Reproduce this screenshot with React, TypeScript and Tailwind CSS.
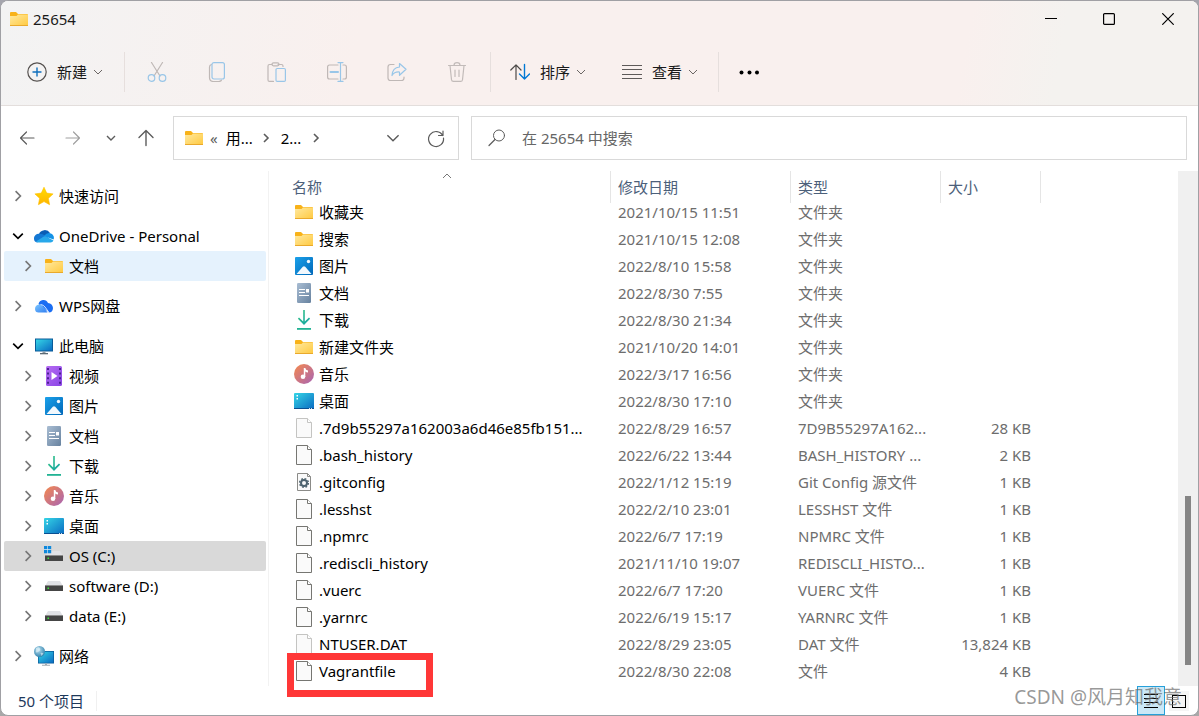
import type { ReactNode } from 'react';

type IconName =
  | 'folder'
  | 'star'
  | 'onedrive'
  | 'wps'
  | 'pc'
  | 'video'
  | 'picture'
  | 'document'
  | 'download'
  | 'music'
  | 'desktop'
  | 'drive'
  | 'system'
  | 'network'
  | 'file'
  | 'hidden'
  | 'config';

interface TreeItem {
  label: string;
  icon: IconName;
  open?: boolean;
  state?: 'hover' | 'selected';
  children?: TreeItem[];
}

interface FileItem {
  name: string;
  icon: IconName;
  date: string;
  type: string;
  size?: string;
  marked?: boolean;
}

const TREE: TreeItem[] = [
  { label: '快速访问', icon: 'star' },
  {
    label: 'OneDrive - Personal',
    icon: 'onedrive',
    open: true,
    children: [{ label: '文档', icon: 'folder', state: 'hover' }],
  },
  { label: 'WPS网盘', icon: 'wps' },
  {
    label: '此电脑',
    icon: 'pc',
    open: true,
    children: [
      { label: '视频', icon: 'video' },
      { label: '图片', icon: 'picture' },
      { label: '文档', icon: 'document' },
      { label: '下载', icon: 'download' },
      { label: '音乐', icon: 'music' },
      { label: '桌面', icon: 'desktop' },
      { label: 'OS (C:)', icon: 'system', state: 'selected' },
      { label: 'software (D:)', icon: 'drive' },
      { label: 'data (E:)', icon: 'drive' },
    ],
  },
  { label: '网络', icon: 'network' },
];

const FILES: FileItem[] = [
  { name: '收藏夹', icon: 'folder', date: '2021/10/15 11:51', type: '文件夹' },
  { name: '搜索', icon: 'folder', date: '2021/10/15 12:08', type: '文件夹' },
  { name: '图片', icon: 'picture', date: '2022/8/10 15:58', type: '文件夹' },
  { name: '文档', icon: 'document', date: '2022/8/30 7:55', type: '文件夹' },
  { name: '下载', icon: 'download', date: '2022/8/30 21:34', type: '文件夹' },
  { name: '新建文件夹', icon: 'folder', date: '2021/10/20 14:01', type: '文件夹' },
  { name: '音乐', icon: 'music', date: '2022/3/17 16:56', type: '文件夹' },
  { name: '桌面', icon: 'desktop', date: '2022/8/30 17:10', type: '文件夹' },
  { name: '.7d9b55297a162003a6d46e85fb151...', icon: 'hidden', date: '2022/8/29 16:57', type: '7D9B55297A162...', size: '28 KB' },
  { name: '.bash_history', icon: 'file', date: '2022/6/22 13:44', type: 'BASH_HISTORY ...', size: '2 KB' },
  { name: '.gitconfig', icon: 'config', date: '2022/1/12 15:19', type: 'Git Config 源文件', size: '1 KB' },
  { name: '.lesshst', icon: 'file', date: '2022/2/10 23:01', type: 'LESSHST 文件', size: '1 KB' },
  { name: '.npmrc', icon: 'file', date: '2022/6/7 17:19', type: 'NPMRC 文件', size: '1 KB' },
  { name: '.rediscli_history', icon: 'file', date: '2021/11/10 19:07', type: 'REDISCLI_HISTO...', size: '1 KB' },
  { name: '.vuerc', icon: 'file', date: '2022/6/7 17:20', type: 'VUERC 文件', size: '1 KB' },
  { name: '.yarnrc', icon: 'file', date: '2022/6/19 15:17', type: 'YARNRC 文件', size: '1 KB' },
  { name: 'NTUSER.DAT', icon: 'hidden', date: '2022/8/29 23:05', type: 'DAT 文件', size: '13,824 KB' },
  { name: 'Vagrantfile', icon: 'file', date: '2022/8/30 22:08', type: '文件', size: '4 KB', marked: true },
];

// Shared gradients, referenced by id from the item icons
function Gradients() {
  return (
    <svg className="absolute size-0" aria-hidden="true">
      <defs>
        <linearGradient id="g-folder" x1="0" y1="0" x2="1" y2="1">
          <stop offset="0" stopColor="#ffe9a0" />
          <stop offset="1" stopColor="#ffc93f" />
        </linearGradient>
        <linearGradient id="g-star" x1="0" y1="0" x2="0" y2="1">
          <stop offset="0" stopColor="#ffdd00" />
          <stop offset="1" stopColor="#ffb400" />
        </linearGradient>
        <linearGradient id="g-blue" x1="0" y1="0" x2="1" y2="1">
          <stop offset="0" stopColor="#1ba1ea" />
          <stop offset="1" stopColor="#0067b8" />
        </linearGradient>
        <linearGradient id="g-screen" x1="0" y1="0" x2="1" y2="1">
          <stop offset="0" stopColor="#35d5e6" />
          <stop offset="1" stopColor="#0a6bc2" />
        </linearGradient>
        <linearGradient id="g-video" x1="0" y1="0" x2="1" y2="1">
          <stop offset="0" stopColor="#b66bf2" />
          <stop offset="1" stopColor="#8a45e6" />
        </linearGradient>
        <linearGradient id="g-doc" x1="0" y1="0" x2="1" y2="1">
          <stop offset="0" stopColor="#a9bdd3" />
          <stop offset="1" stopColor="#67829f" />
        </linearGradient>
        <linearGradient id="g-down" x1="0" y1="0" x2="1" y2="1">
          <stop offset="0" stopColor="#33c481" />
          <stop offset="1" stopColor="#14a3a8" />
        </linearGradient>
        <linearGradient id="g-music" x1="0" y1="0" x2="1" y2="1">
          <stop offset="0" stopColor="#f6894c" />
          <stop offset="1" stopColor="#a764b5" />
        </linearGradient>
        <linearGradient id="g-wps" x1="0" y1="0" x2="1" y2="1">
          <stop offset="0" stopColor="#7cc6ff" />
          <stop offset="1" stopColor="#2f7df0" />
        </linearGradient>
        <radialGradient id="g-globe" cx="0.4" cy="0.35" r="0.7">
          <stop offset="0" stopColor="#b9e0f0" />
          <stop offset="1" stopColor="#2c7fab" />
        </radialGradient>
      </defs>
    </svg>
  );
}

const drive = (
  <>
    <path d="M4 5h12l3 5H1z" fill="#e1e2e6" />
    <path d="M1 9h18v6H1z" fill="#454545" />
    <path d="M1 9h18v1H1z" fill="#8d8d8d" />
    <path d="M3.5 11.5h1.5v1.5H3.5z" fill="#39e639" />
  </>
);

const sheet = (stroke: string) => (
  <g stroke={stroke} fill="#fafafa">
    <path d="M2.5 .5h11l4 4v15h-15z" />
    <path d="M13.5 .5v4h4" fill="#fff" />
  </g>
);

const ICONS: Record<IconName, ReactNode> = {
  folder: (
    <>
      <path d="M1 4a1 1 0 0 1 1-1h5l2 2h9a1 1 0 0 1 1 1v3H1z" fill="#f8b219" />
      <path d="M1 7h6.500l1.500-1.500h10V17H1z" fill="url(#g-folder)" />
      <path d="M1 16h18v1H1z" fill="#e9a92c" />
    </>
  ),
  star: <path d="m10 1.200 2.700 5.900 6.400.8-4.700 4.400 1.200 6.400L10 15.600l-5.600 3.100 1.200-6.400L.9 7.900l6.400-.8z" fill="url(#g-star)" stroke="#ffbf00" strokeWidth=".6" strokeLinejoin="round" />,
  onedrive: (
    <>
      <path d="M5 8a6 5.500 0 0 1 11-1l-5 6z" fill="#0a5db5" />
      <path d="M0 12.500A4.500 4.500 0 0 1 6 8q2-.5 4 1l5 3-12 4.500a4 4 0 0 1-3-4z" fill="#1478d4" />
      <path d="M10 10q3-4 7-2.500a4.500 4.500 0 0 1 2.500 6z" fill="#1492e6" />
      <path d="M2 15.500 9 11q2-1.300 4 0l6.500 3.500a3.500 3.500 0 0 1-3 2H4.500q-1.500 0-2.500-1z" fill="#28a8ea" />
    </>
  ),
  wps: (
    <>
      <path d="M4.500 8a5 5 0 0 1 9.500-1q4.500.5 5 5c0 3-2 4.500-4 4.500z" fill="#1b6ef3" />
      <path d="M1 13q0-4 4-4.500 3-.3 5 3l3.500 5H4.500Q1.200 16.500 1 13z" fill="url(#g-wps)" />
      <path d="M6.500 8.500q3 .3 4.500 2.500l4 5.500" fill="none" stroke="#e8f4ff" strokeWidth=".9" />
    </>
  ),
  pc: (
    <>
      <path d="M1 2.500h18v13H1z" fill="#0a5b98" />
      <path d="M2 3.500h16v11H2z" fill="url(#g-screen)" />
      <path d="M8.500 15.500h3V17h-3z" fill="#8e9ba5" />
      <path d="M6 17h8v1.300H6z" fill="#5c6a74" />
    </>
  ),
  video: (
    <>
      <rect x="2" width="16" height="20" rx="1.500" fill="url(#g-video)" />
      <path d="M4 2v16M16 2v16" stroke="#4b2390" strokeWidth="2" strokeDasharray="2 2.600" />
      <path d="m7.500 6 6 4-6 4z" fill="#fff" />
    </>
  ),
  picture: (
    <>
      <rect x="1" y="1" width="18" height="18" rx="1" fill="url(#g-blue)" />
      <path d="m2.500 18 6.300-7.200q1.200-1 2.400 0L17.500 18z" fill="#f2f8fd" />
      <circle cx="14.500" cy="5.500" r="1.700" fill="#f2f8fd" />
    </>
  ),
  document: (
    <>
      <rect x="3" width="14" height="20" rx="1.200" fill="url(#g-doc)" />
      <path d="M5 6.500h6M5 9.500h6M5 12.500h10" stroke="#fff" strokeWidth="1.200" />
      <path d="M12 6h3v3.500h-3z" fill="#fff" />
    </>
  ),
  download: (
    <>
      <path d="M9.200 0h1.600v11.500l4.200-4 1.100 1.200L10 15 3.900 8.700 5 7.500l4.200 4z" fill="url(#g-down)" />
      <path d="M3 18h14v1.800H3z" fill="#22b394" />
    </>
  ),
  music: (
    <>
      <circle cx="10" cy="10" r="10" fill="url(#g-music)" />
      <circle cx="9" cy="12.700" r="2.300" fill="#fff" />
      <path d="M9.800 13V4h1.500q.3 2 2.700 2.500v2q-1.600-.2-2.700-1v5.500z" fill="#fff" />
    </>
  ),
  desktop: (
    <>
      <rect y="2" width="20" height="16" rx="1" fill="url(#g-screen)" />
      <path d="M0 17h20v1H0z" fill="#0a4f91" />
      <path d="M2.500 4h1.500v1.500H2.500zM2.500 7h1.500v1.500H2.500z" fill="#fff" />
      <path d="M15 17.500h4" stroke="#fff" strokeWidth=".8" strokeDasharray="1 1" />
    </>
  ),
  drive,
  system: (
    <>
      {drive}
      <path d="M0 0h7v7H0z" fill="#e8eef3" />
      <path d="M0 0h3.300v3.300H0zM3.900 0h3.300v3.300H3.900zM0 3.900h3.300v3.300H0zM3.900 3.900h3.300v3.300H3.900z" fill="#0f88dc" />
    </>
  ),
  network: (
    <>
      <path d="M4 5h16v12.500H4z" fill="#0a5b98" />
      <path d="M4.700 5.700h14.600v11H4.700z" fill="url(#g-screen)" />
      <path d="M11 17.500h2v1.300h3v1H8v-1h3z" fill="#a2abb2" />
      <circle cx="5.500" cy="5.500" r="5.500" fill="url(#g-globe)" />
      <path d="M2 2q3-1.500 4 .5T4 6 2 4.500zM6.500 7q2-.5 3 .5l-2 2.500z" fill="#eaf6fb" opacity=".6" />
    </>
  ),
  file: sheet('#767672'),
  hidden: sheet('#c4c4c2'),
  config: (
    <>
      <path d="M3.500 1.500h10l3 3v14h-13z" fill="#fafafa" stroke="#8b8b88" />
      <path d="M13.500 1.500v3h3" fill="none" stroke="#8b8b88" />
      <circle cx="10" cy="11" r="3" fill="none" stroke="#4e636f" strokeWidth="2" />
      <circle cx="10" cy="11" r="4.400" fill="none" stroke="#4e636f" strokeWidth="1.400" strokeDasharray="1.800 1.655" />
    </>
  ),
};

function ItemIcon({ name }: { name: IconName }) {
  return (
    <svg viewBox="0 0 20 20" className="size-5 shrink-0" aria-hidden="true">
      {ICONS[name]}
    </svg>
  );
}

// Thin stroked glyph on a 20x20 grid
function Glyph({ children, className = 'size-5' }: { children: ReactNode; className?: string }) {
  return (
    <svg
      viewBox="0 0 20 20"
      className={`shrink-0 ${className}`}
      fill="none"
      stroke="currentColor"
      strokeWidth="1.2"
      strokeLinecap="round"
      strokeLinejoin="round"
      aria-hidden="true"
    >
      {children}
    </svg>
  );
}

function Chevron({ dir, className, weight = 1 }: { dir: 'up' | 'down' | 'right'; className: string; weight?: number }) {
  const paths = { up: 'M1 7l4-4 4 4', down: 'M1 3l4 4 4-4', right: 'M3 1l4 4-4 4' };
  return (
    <svg
      viewBox="0 0 10 10"
      className={`shrink-0 ${className}`}
      fill="none"
      stroke="currentColor"
      strokeWidth={weight}
      aria-hidden="true"
    >
      <path d={paths[dir]} />
    </svg>
  );
}

function TitleBar() {
  return (
    <div className="flex h-9 items-center justify-between pl-2">
      <div className="flex items-center gap-1">
        <ItemIcon name="folder" />
        <h1>25654</h1>
      </div>
      <div className="flex text-black">
        <button aria-label="最小化" className="flex h-9 w-[58px] items-center justify-center">
          <svg viewBox="0 0 12 12" className="size-3" stroke="currentColor" aria-hidden="true">
            <path d="M0 5.5h12" />
          </svg>
        </button>
        <button aria-label="最大化" className="flex h-9 w-[58px] items-center justify-center">
          <svg viewBox="0 0 12 12" className="size-3" stroke="currentColor" fill="none" aria-hidden="true">
            <rect x=".6" y=".6" width="10.800" height="10.800" rx="1" strokeWidth="1.200" />
          </svg>
        </button>
        <button aria-label="关闭" className="flex h-9 w-[60px] items-center justify-center">
          <svg viewBox="0 0 12 12" className="size-3" stroke="currentColor" strokeWidth="1.200" aria-hidden="true">
            <path d="M.3.3l11.400 11.400M11.700.3.300 11.700" />
          </svg>
        </button>
      </div>
    </div>
  );
}

const ACTIONS: { label: string; icon: ReactNode }[] = [
  {
    label: '剪切',
    icon: (
      <>
        <path d="M4.500.5l8.500 13.500M15.500.5L7 14" stroke="#bfb8b6" />
        <circle cx="4.500" cy="16" r="3.300" />
        <circle cx="15.500" cy="16" r="3.300" />
      </>
    ),
  },
  {
    label: '复制',
    icon: (
      <>
        <path d="M4.500 2.500Q2.500 3 2.500 5v10.500q0 4 4 4h5q2.500 0 3-1.500" stroke="#bfb8b6" />
        <rect x="5" y=".6" width="12.400" height="16.400" rx="2" />
      </>
    ),
  },
  {
    label: '粘贴',
    icon: (
      <>
        <path d="M6.500 19.400h-4q-1.500 0-1.500-1.500V4q0-1.500 1.500-1.500H5m6 0h3.500Q16 2.500 16 4v.5" stroke="#bfb8b6" />
        <rect x="5" y=".8" width="7" height="3" rx="1.500" stroke="#bfb8b6" />
        <rect x="9" y="6.500" width="9.400" height="12.900" rx="1.200" />
      </>
    ),
  },
  {
    label: '重命名',
    icon: (
      <>
        <path d="M11 3H2.500Q.6 3 .6 5v10q0 2 1.900 2H11m5-14h1.500q1.900 0 1.900 2v10q0 2-1.900 2H16" stroke="#bfb8b6" />
        <path d="M11 .6h5M11 19.400h5M13.500.6v18.800" />
        <path d="M3.500 10H11" strokeWidth="2" />
      </>
    ),
  },
  {
    label: '共享',
    icon: (
      <>
        <path d="M7 2.500H3.500Q1 2.500 1 5v11q0 2.500 2.500 2.500h11Q17 18.500 17 16v-1" stroke="#bfb8b6" />
        <path d="M12.500 1.500 19 7.300l-6.500 6V10Q7.500 9.500 5 13.500 5.500 5.500 12.500 5z" />
      </>
    ),
  },
  {
    label: '删除',
    icon: (
      <g stroke="#c2bbb9">
        <path d="M1.500 3.500h17M7 3.300q0-2.700 3-2.700t3 2.700M3 3.500l1.500 14.200q.2 1.700 2 1.700h7q1.800 0 2-1.700L17 3.500" />
        <path d="M8 8v6.500M12 8v6.500" />
      </g>
    ),
  },
];

function Separator({ className }: { className: string }) {
  return <div className={`h-10 w-px shrink-0 bg-[#e6dfdd] ${className}`} />;
}

function Toolbar() {
  return (
    <div className="flex h-[68px] items-center pt-[2px] pl-[26px]">
      <button className="flex items-center gap-[6px]">
        <span className="flex items-center gap-[10px]">
          <Glyph className="size-5 text-[#55514f]">
            <circle cx="10" cy="10" r="9.200" />
            <path d="M10 6v8M6 10h8" stroke="#0f6fbd" strokeWidth="1.400" />
          </Glyph>
          新建
        </span>
        <Chevron dir="down" className="size-[10px] text-[#6b6664]" />
      </button>
      <Separator className="ml-[21px] mr-[2px]" />
      {ACTIONS.map((a) => (
        <button key={a.label} disabled aria-label={a.label} className="flex h-10 w-[60px] items-center justify-center text-[#99c6e8]">
          <Glyph>{a.icon}</Glyph>
        </button>
      ))}
      <Separator className="ml-[3px] mr-[19px]" />
      <button className="flex items-center gap-[6px]">
        <span className="flex items-center gap-[10px]">
          <Glyph className="size-5 text-[#4c4947]">
            <path d="M6 17.500V3M.8 8 6 2.800 11 8" />
            <path d="M14.500 2.500V17M9.500 12l5 5 5-5" stroke="#0078d4" strokeWidth="1.400" />
          </Glyph>
          排序
        </span>
        <Chevron dir="down" className="size-[10px] text-[#6b6664]" />
      </button>
      <button className="ml-9 flex items-center gap-[6px]">
        <span className="flex items-center gap-[10px]">
          <svg viewBox="0 0 20 20" className="size-5 shrink-0" stroke="#5e5a59" aria-hidden="true">
            <path d="M0 3.500h20M0 7.500h20M0 12.500h20M0 16.500h20" />
          </svg>
          查看
        </span>
        <Chevron dir="down" className="size-[10px] text-[#6b6664]" />
      </button>
      <Separator className="mx-5" />
      <button aria-label="查看更多">
        <svg viewBox="0 0 20 20" className="size-5" aria-hidden="true">
          <circle cx="2.500" cy="10.500" r="2" />
          <circle cx="10.500" cy="10.500" r="2" />
          <circle cx="18" cy="10.500" r="2" />
        </svg>
      </button>
    </div>
  );
}

function AddressRow() {
  return (
    <div className="flex items-center pt-[10px] pr-[11px] pb-[11px] text-[#5c5c5c]">
      <div className="flex w-[172px] shrink-0 items-center pl-4">
        <button aria-label="返回">
          <Glyph>
            <path d="M17 10H3.500M9.500 4l-6 6 6 6" />
          </Glyph>
        </button>
        <button aria-label="前进" className="ml-[26px] text-[#a0a0a0]">
          <Glyph>
            <path d="M3 10h13.500M10.500 4l6 6-6 6" />
          </Glyph>
        </button>
        <button aria-label="最近浏览的位置" className="ml-[23px]">
          <Chevron dir="down" weight={1.4} className="size-[10px]" />
        </button>
        <button aria-label="向上" className="ml-[20px]">
          <Glyph>
            <path d="M10 17.500v-15M3 9.500l7-7 7 7" strokeWidth="1.400" />
          </Glyph>
        </button>
      </div>
      <nav aria-label="地址" className="flex h-11 w-[286px] shrink-0 items-center border border-[#d9d9d9] pl-[10px] pr-3">
        <ItemIcon name="folder" />
        <span className="ml-[6px] text-[#5c5c5c]">«</span>
        <a href="#users" className="ml-2 text-black">用...</a>
        <Chevron dir="right" weight={1.6} className="mx-2 size-[10px]" />
        <a href="#25654" className="ml-[2px] text-black">2...</a>
        <Chevron dir="right" weight={1.6} className="mx-[10px] size-[10px]" />
        <button aria-label="以前的位置" className="ml-auto">
          <Chevron dir="down" className="size-[14px]" />
        </button>
        <button aria-label="刷新" className="ml-[26px]">
          <Glyph>
            <path d="M16.700 7.500A7.500 7.500 0 1 0 17.500 10M17 3v4.500h-4.500" />
          </Glyph>
        </button>
      </nav>
      <label className="ml-3 flex h-11 flex-1 items-center gap-[15px] border border-[#d9d9d9] pl-[15px]">
        <Glyph>
          <circle cx="12" cy="7.500" r="5.500" strokeWidth="1" />
          <path d="M8 11.500 2 17.500" />
        </Glyph>
        <input type="text" aria-label="搜索" placeholder="在 25654 中搜索" className="w-full outline-none placeholder:text-[#666]" />
      </label>
    </div>
  );
}

function TreeRow({ item, nested }: { item: TreeItem; nested?: boolean }) {
  const bg =
    item.state === 'hover' ? 'bg-[#e5f2fd]' : item.state === 'selected' ? 'bg-[#d9d9d9]' : '';
  return (
    <div className={`mr-[2px] ml-[3px] flex h-[30px] items-center rounded-xs ${nested ? 'pl-[18px]' : 'pl-2'} ${bg}`}>
      <button aria-label={item.open ? '折叠' : '展开'}>
        <Chevron
          dir={item.open ? 'down' : 'right'}
          weight={1.4}
          className={item.open ? 'size-3 text-black' : 'size-3 text-[#777]'}
        />
      </button>
      <a href="#" className="ml-[10px] flex items-center gap-[5px]">
        <ItemIcon name={item.icon} />
        {item.label}
      </a>
    </div>
  );
}

function Sidebar() {
  return (
    <nav aria-label="导航窗格" className="flex w-[268px] shrink-0 flex-col gap-[10px] border-r border-[#f2f2f2] pt-[10px] text-black">
      {TREE.map((item) => (
        <div key={item.label}>
          <TreeRow item={item} />
          {item.children?.map((child) => (
            <TreeRow key={child.label} item={child} nested />
          ))}
        </div>
      ))}
    </nav>
  );
}

function HeaderCell({ children, className = 'pl-[7px]' }: { children: ReactNode; className?: string }) {
  return (
    <th className="p-0 text-left font-normal">
      <div className={`relative -mb-1 flex h-8 items-center border-r border-[#e5e5e5] ${className}`}>
        {children}
      </div>
    </th>
  );
}

function FileTable() {
  return (
    <table className="w-[757px] table-fixed border-collapse whitespace-nowrap text-[#6d6d6d]">
      <colgroup>
        <col className="w-[327px]" />
        <col className="w-[180px]" />
        <col className="w-[150px]" />
        <col className="w-[100px]" />
      </colgroup>
      <thead className="text-[#4c607a]">
        <tr>
          <HeaderCell className="pl-2">
            名称
            <span className="absolute inset-x-0 top-0 flex justify-center text-[#777]">
              <Chevron dir="up" className="size-[10px]" />
            </span>
          </HeaderCell>
          <HeaderCell>修改日期</HeaderCell>
          <HeaderCell>类型</HeaderCell>
          <HeaderCell>大小</HeaderCell>
        </tr>
      </thead>
      <tbody>
        {FILES.map((f) => (
          <tr key={f.name} className="h-[27px]">
            <td className="relative p-0 pb-px pl-[10px] text-black">
              <a href="#" className="flex items-center gap-[5px]">
                <ItemIcon name={f.icon} />
                {f.name}
              </a>
              {f.marked && (
                <span className="absolute -top-[5px] left-[3px] h-11 w-[146px] border-7 border-[#ff3737]" />
              )}
            </td>
            <td className="p-0 pb-px pl-[7px]">{f.date}</td>
            <td className="p-0 pb-px pl-[7px]">{f.type}</td>
            <td className="p-0 pr-[10px] pb-px text-right">{f.size}</td>
          </tr>
        ))}
      </tbody>
    </table>
  );
}

function StatusBar() {
  return (
    <footer className="relative flex h-[29px] shrink-0 items-center pr-[9px] pl-[17px] text-[#1e395b]">
      <span className="border-r border-[#f0f0f0] pr-3">50 个项目</span>
      <div className="ml-auto flex items-center gap-1 text-black">
        <button aria-label="详细信息" className="flex h-[29px] w-7 items-center justify-center border border-[#26a0da] bg-[#cbe8f6]">
          <svg viewBox="0 0 16 16" className="size-4" stroke="currentColor" aria-hidden="true">
            <path d="M1 1.500h14M1 5.500h14M1 9.500h14M1 14.500h14" />
          </svg>
        </button>
        <button aria-label="大图标" className="flex size-5 items-center justify-center bg-[#f5f5f5]">
          <svg viewBox="0 0 16 16" className="size-4" stroke="currentColor" fill="none" aria-hidden="true">
            <rect x="1.500" y="2.500" width="13" height="12" />
          </svg>
        </button>
      </div>
      <span className="pointer-events-none absolute right-4 bottom-[5px] text-[19px] leading-[26px] text-[#6b6b6b]/70">
        CSDN @风月知我意
      </span>
    </footer>
  );
}

export default function App() {
  return (
    <div className="flex min-h-screen bg-[linear-gradient(#a5a5ad_0_24%,#3b3b40_24%_73%,#a8a8a8_73%)] font-['Noto_Sans','Noto_Sans_CJK_SC',sans-serif] text-[15px] leading-5 text-[#1a1a1a]">
      <Gradients />
      <div className="flex flex-1 flex-col overflow-hidden rounded-lg border border-[#a0a0a4] bg-white">
        <header className="border-b border-[#e3dedc] bg-[linear-gradient(100deg,#f3f3f3,#f9f0ee_30%,#f9f0ee_80%,#f4f2ef_88%)]">
          <TitleBar />
          <Toolbar />
        </header>
        <AddressRow />
        <div className="flex flex-1">
          <Sidebar />
          <main className="min-w-0 flex-1 pl-[15px]">
            <FileTable />
          </main>
          <div className="flex w-5 shrink-0 flex-col items-center bg-[#f0f0f0]">
            <div className="flex-1" />
            <div className="mb-[21px] h-[169px] w-[6px] bg-[#858585]" />
          </div>
        </div>
        <StatusBar />
      </div>
    </div>
  );
}
